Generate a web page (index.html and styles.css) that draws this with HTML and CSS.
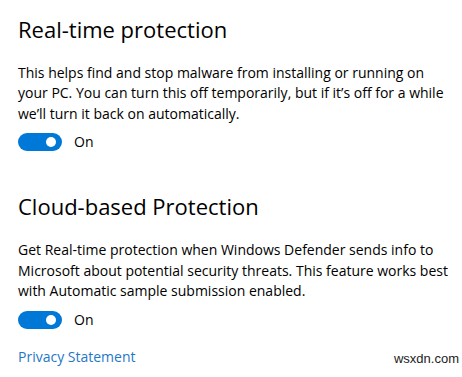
FILE: index.html
```html
<!DOCTYPE html>
<html lang="en">
<head>
<meta charset="utf-8">
<title>Windows Defender</title>
<link rel="stylesheet" href="styles.css">
</head>
<body>
<main class="page">
  <section class="group">
    <h2 class="title">Real-time protection</h2>
    <p class="desc">This helps find and stop malware from installing or running on your PC. You can turn this off temporarily, but if it’s off for a while we’ll turn it back on automatically.</p>
    <div class="toggle-row">
      <span class="switch"><span class="knob"></span></span>
      <span class="state">On</span>
    </div>
  </section>
  <section class="group">
    <h2 class="title">Cloud-based Protection</h2>
    <p class="desc">Get Real-time protection when Windows Defender sends info to Microsoft about potential security threats. This feature works best with Automatic sample submission enabled.</p>
    <div class="toggle-row">
      <span class="switch"><span class="knob"></span></span>
      <span class="state">On</span>
    </div>
  </section>
  <a class="link" href="#">Privacy Statement</a>
</main>
<div class="watermark">wsxdn.com</div>
</body>
</html>
```

FILE: styles.css
```css
html, body {
  margin: 0;
  padding: 0;
  background: #ffffff;
}
body {
  width: 462px;
  height: 377px;
  overflow: hidden;
  position: relative;
  font-family: "Open Sans", "Noto Sans", sans-serif;
  color: #000000;
}
.page {
  padding: 13.5px 0 0 18px;
  display: flex;
  flex-direction: column;
  align-items: flex-start;
}
.group {
  display: flex;
  flex-direction: column;
  align-items: flex-start;
  margin-bottom: 39px;
}
.group + .group {
  margin-bottom: 17px;
}
.title {
  margin: 0;
  font-size: 22px;
  font-weight: 400;
  line-height: 30px;
  color: #000;
}
.desc {
  margin: 19px 0 0 0;
  width: 430px;
  font-size: 14px;
  line-height: 20.5px;
}
.toggle-row {
  margin-top: 8px;
  display: flex;
  align-items: center;
  gap: 12px;
  height: 20px;
}
.switch {
  width: 44px;
  height: 18px;
  border-radius: 9px;
  background: #0078d7;
  display: flex;
  align-items: center;
  justify-content: flex-end;
  padding-right: 6px;
  box-sizing: border-box;
}
.knob {
  width: 10px;
  height: 10px;
  border-radius: 50%;
  background: #ffffff;
}
.state {
  font-size: 14px;
  line-height: 20px;
}
.link {
  font-size: 14px;
  line-height: 20px;
  color: #1f78c8;
  text-decoration: none;
}
.watermark {
  position: absolute;
  right: 3px;
  bottom: 11px;
  font-family: "Liberation Sans", Arial, sans-serif;
  font-size: 13px;
  color: #222;
}
```
